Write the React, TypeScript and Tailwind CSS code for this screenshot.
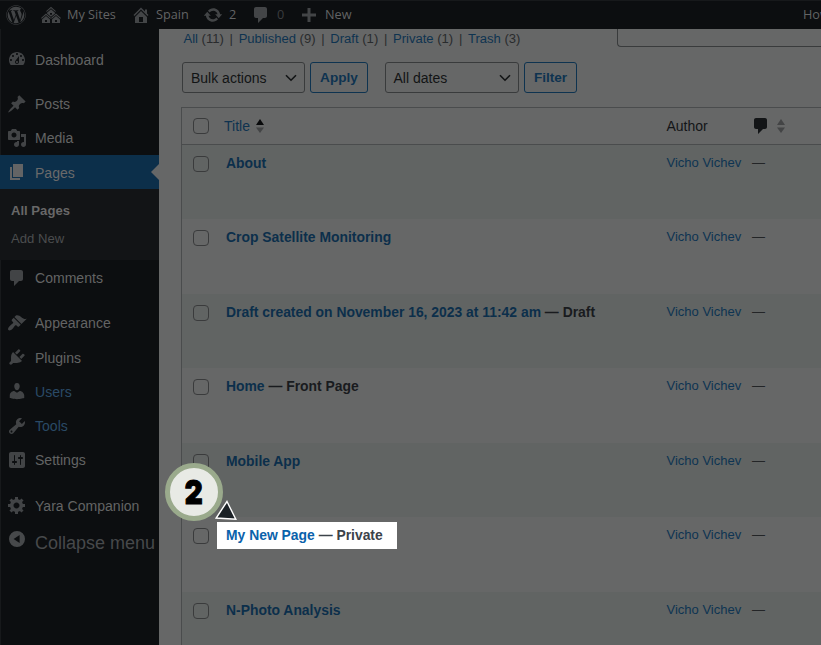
import React from "react";
import { FaWordpress } from "react-icons/fa";

const ICONS = {
  dashboard:
    "M3.76 16h12.48c1.1-1.37 1.76-3.11 1.76-5 0-4.42-3.58-8-8-8s-8 3.58-8 8c0 1.89.66 3.63 1.76 5zM10 4c.55 0 1 .45 1 1s-.45 1-1 1-1-.45-1-1 .45-1 1-1zM6 6c.55 0 1 .45 1 1s-.45 1-1 1-1-.45-1-1 .45-1 1-1zm8 0c.55 0 1 .45 1 1s-.45 1-1 1-1-.45-1-1 .45-1 1-1zm-5.37 5.55L12 7v6c0 1.1-.9 2-2 2s-2-.9-2-2c0-.57.24-1.08.63-1.45zM4 10c.55 0 1 .45 1 1s-.45 1-1 1-1-.45-1-1 .45-1 1-1zm12 0c.55 0 1 .45 1 1s-.45 1-1 1-1-.45-1-1 .45-1 1-1zm-5 3c0-.55-.45-1-1-1s-1 .45-1 1 .45 1 1 1 1-.45 1-1z",
  post: "M10.44 3.02l1.82-1.82 6.36 6.35-1.83 1.82c-1.05-.68-2.48-.57-3.41.36l-.75.75c-.92.93-1.04 2.35-.35 3.41l-1.83 1.82-2.41-2.41-2.8 2.79c-.42.42-3.38 2.71-3.8 2.29s1.86-3.39 2.28-3.81l2.79-2.79L4.1 9.36l1.83-1.82c1.05.69 2.48.57 3.4-.36l.75-.75c.93-.92 1.05-2.35.36-3.41z",
  media:
    "M13 11V4c0-.55-.45-1-1-1h-1.67L9 1H5L3.67 3H2c-.55 0-1 .45-1 1v7c0 .55.45 1 1 1h10c.55 0 1-.45 1-1zM7 4.5c1.38 0 2.5 1.12 2.5 2.5S8.38 9.5 7 9.5 4.5 8.38 4.5 7 5.62 4.5 7 4.5zM14 6h5v10.5c0 1.38-1.12 2.5-2.5 2.5S14 17.88 14 16.5s1.12-2.5 2.5-2.5c.17 0 .34.02.5.05V9h-3V6zm-4 8.05V13h2v3.5c0 1.38-1.12 2.5-2.5 2.5S7 17.88 7 16.5 8.12 14 9.5 14c.17 0 .34.02.5.05z",
  page: "M6 15V2h10v13H6zm-1 1h8v2H3V5h2v11z",
  comment:
    "M5 2h9c1.1 0 2 .9 2 2v7c0 1.1-.9 2-2 2h-2l-5 5v-5H5c-1.1 0-2-.9-2-2V4c0-1.1.9-2 2-2z",
  appearance:
    "M14.48 11.06L7.41 3.99l1.5-1.5c.5-.56 2.3-.47 3.51.32 1.21.8 1.43 1.28 2.91 2.1 1.18.64 2.45 1.26 4.45.85zm-.71.71L6.7 4.7 4.93 6.47c-.39.39-.39 1.02 0 1.41l1.06 1.06c.39.39.39 1.03 0 1.42-.6.6-1.43 1.11-2.21 1.69-.35.26-.7.53-1.01.84C1.43 14.23.4 16.08 1.4 17.07c.99 1 2.84-.03 4.18-1.36.31-.31.58-.66.85-1.02.57-.78 1.08-1.61 1.69-2.21.39-.39 1.02-.39 1.41 0l1.06 1.06c.39.39 1.02.39 1.41 0z",
  plugins:
    "M13.11 4.36L9.87 7.6 8 5.73l3.24-3.24c.35-.34 1.05-.2 1.56.32.52.51.66 1.21.31 1.55zm-8 1.77l.91-1.12 9.01 9.01-1.19.84c-.71.71-2.63 1.16-3.82 1.16H6.14L4.9 17.26c-.59.59-1.54.59-2.12 0-.59-.58-.59-1.53 0-2.12l1.24-1.24v-3.88c0-1.13.4-3.19 1.09-3.89zm7.26 3.97l3.24-3.24c.34-.35 1.04-.21 1.55.31.52.51.66 1.21.31 1.55l-3.24 3.25z",
  users:
    "M10 9.25c-2.27 0-2.73-3.44-2.73-3.44C7 4.02 7.82 2 9.97 2c2.16 0 2.98 2.02 2.71 3.81 0 0-.41 3.44-2.68 3.44zm0 2.57L12.72 10c2.39 0 4.52 2.33 4.52 4.53v2.49s-3.65 1.13-7.24 1.13c-3.65 0-7.24-1.13-7.24-1.13v-2.49c0-2.25 1.94-4.48 4.47-4.48z",
  tools:
    "M16.68 9.77c-1.34 1.34-3.3 1.67-4.95.99l-5.41 6.52c-.99.99-2.59.99-3.58 0s-.99-2.59 0-3.57l6.52-5.42c-.68-1.65-.35-3.61.99-4.95 1.28-1.28 3.12-1.62 4.72-1.06l-2.89 2.89 2.82 2.82 2.86-2.87c.53 1.58.18 3.39-1.08 4.65zM3.81 16.21c.4.39 1.04.39 1.43 0 .4-.4.4-1.04 0-1.43-.39-.4-1.03-.4-1.43 0-.39.39-.39 1.03 0 1.43z",
  settings:
    "M18 16V4c0-1.1-.9-2-2-2H4c-1.1 0-2 .9-2 2v12c0 1.1.9 2 2 2h12c1.1 0 2-.9 2-2zM8 11h1c.55 0 1 .45 1 1s-.45 1-1 1H8v1.5c0 .28-.22.5-.5.5s-.5-.22-.5-.5V13H6c-.55 0-1-.45-1-1s.45-1 1-1h1V5.5c0-.28.22-.5.5-.5s.5.22.5.5V11zm5-2h-1c-.55 0-1-.45-1-1s.45-1 1-1h1V5.5c0-.28.22-.5.5-.5s.5.22.5.5V7h1c.55 0 1 .45 1 1s-.45 1-1 1h-1v5.5c0 .28-.22.5-.5.5s-.5-.22-.5-.5V9z",
  generic:
    "M18 12h-2.18c-.17.7-.44 1.35-.81 1.93l1.54 1.54-2.1 2.1-1.54-1.54c-.58.36-1.23.63-1.91.79V19H8v-2.18c-.68-.16-1.33-.43-1.91-.79l-1.54 1.54-2.12-2.12 1.54-1.54c-.36-.58-.63-1.23-.79-1.91H1V9.03h2.17c.16-.7.44-1.35.8-1.94L2.43 5.55l2.1-2.1 1.54 1.54c.58-.37 1.24-.64 1.93-.81V2h3v2.18c.68.16 1.33.43 1.91.79l1.54-1.54 2.12 2.12-1.54 1.54c.36.59.64 1.24.8 1.94H18V12zm-8.5 1.5c1.66 0 3-1.34 3-3s-1.34-3-3-3-3 1.34-3 3 1.34 3 3 3z",
  update:
    "M10.2 3.28c3.53 0 6.43 2.61 6.92 6h2.08l-3.5 4-3.5-4h2.32c-.45-1.97-2.21-3.45-4.32-3.45-1.45 0-2.73.71-3.54 1.78L4.95 5.66C6.23 4.2 8.11 3.28 10.2 3.28zm-.4 13.44c-3.52 0-6.43-2.61-6.92-6H.8l3.5-4c1.17 1.33 2.33 2.67 3.5 4H5.48c.45 1.97 2.21 3.45 4.32 3.45 1.45 0 2.73-.71 3.54-1.78l1.71 1.95c-1.28 1.46-3.15 2.38-5.25 2.38z",
  home: "M16 8.5l1.53 1.53-1.06 1.06L10 4.6l-6.47 6.49-1.06-1.06L10 2.5l4 4v-2h2v4zm-6-2.46l6 5.99V18H4v-5.97zM12 17v-5H8v5h4z",
  multisite:
    "M14.27 6.87L10 3.14 5.73 6.87 5 6.14l5-4.38 5 4.38zM14 8.42l-4.05 3.43L6 8.38v-.74l4-3.5 4 3.5v.78zM11 9.7V8H9v1.7h2zm-1.73 4.03L5 10 .73 13.73 0 13l5-4.38L10 13zm10 0L15 10l-4.27 3.73L10 13l5-4.38L20 13zM5 11l4 3.5V18H1v-3.5zm10 0l4 3.5V18h-8v-3.5zm-9 6v-2H4v2h2zm10 0v-2h-2v2h2z",
  plus: "M17 8.5v3h-5.5V17h-3v-5.5H3v-3h5.5V3h3v5.5H17z",
  collapse:
    "M10 2a8 8 0 1 1 0 16 8 8 0 0 1 0-16zM12.6 6v8L6.6 10z",
};

type IconName = keyof typeof ICONS;

function Icon({ name, className = "size-5" }: { name: IconName; className?: string }) {
  return (
    <svg viewBox="0 0 20 20" className={`shrink-0 ${className}`} fill="currentColor" fillRule="evenodd">
      <path d={ICONS[name]} />
    </svg>
  );
}

function MenuItem({ icon, label, className = "text-[#636464]" }: { icon: IconName; label: string; className?: string }) {
  return (
    <li className={`flex h-[34.3px] items-center pl-[7px] ${className}`}>
      <Icon name={icon} className={`size-5 ${icon === "page" ? "text-[#636465]" : "text-[#424446]"}`} />
      <span className="pt-[2px] pl-2">{label}</span>
    </li>
  );
}

function Checkbox() {
  return <span className="block size-4 shrink-0 rounded-[4px] border border-[#3a3b3c]" />;
}

function Select({ label, className }: { label: string; className: string }) {
  return (
    <div className={`flex h-[31px] items-center justify-between rounded-[3px] border border-[#393b3c] pr-[7px] pl-2 text-[#121415] ${className}`}>
      <span className="pt-px">{label}</span>
      <svg viewBox="0 0 12 8" className="h-2 w-3" fill="none" stroke="currentColor" strokeWidth="1.6">
        <path d="M1 1.2l5 5 5-5" />
      </svg>
    </div>
  );
}

function Button({ label, className }: { label: string; className: string }) {
  return (
    <div className={`flex h-[31px] items-center justify-center rounded-[3px] border border-[#0e3350] pt-px text-[13.6px] font-bold text-[#0e3350] ${className}`}>
      {label}
    </div>
  );
}

function Sorter({ active = false }: { active?: boolean }) {
  return (
    <svg viewBox="0 0 8 14" className="h-3.5 w-2 shrink-0">
      <path d="M4 0l4 6H0z" fill={active ? "#090a0b" : "#434445"} />
      <path d="M0 8.5h8l-4 5.5z" fill="#434445" />
    </svg>
  );
}

const VIEWS = [
  ["All", 11],
  ["Published", 9],
  ["Draft", 1],
  ["Private", 1],
  ["Trash", 3],
] as const;

const PAGES: { title: string; state?: string; highlighted?: boolean }[] = [
  { title: "About" },
  { title: "Crop Satellite Monitoring" },
  { title: "Draft created on November 16, 2023 at 11:42 am", state: "Draft" },
  { title: "Home", state: "Front Page" },
  { title: "Mobile App" },
  { title: "My New Page", state: "Private", highlighted: true },
  { title: "N-Photo Analysis" },
];

function AdminBar() {
  return (
    <header className="flex h-[29px] shrink-0 items-center overflow-hidden border-t border-[#17191b] bg-[#0c0e10] font-['Open_Sans','Noto_Sans',sans-serif] text-[12.7px] whitespace-nowrap text-[#626364]">
      <FaWordpress className="ml-[6px] size-5 shrink-0 text-[#434547]" />
      <div className="ml-[15px] flex w-[90px] items-center gap-[6px]">
        <Icon name="multisite" className="size-5 text-[#434547]" />
        <span>My Sites</span>
      </div>
      <div className="flex w-[72px] items-center gap-[5px]">
        <Icon name="home" className="size-5 text-[#434547]" />
        <span>Spain</span>
      </div>
      <div className="flex w-[48px] items-center gap-[6px]">
        <Icon name="update" className="size-5 text-[#434547]" />
        <span>2</span>
      </div>
      <div className="flex w-[48px] items-center gap-[6px]">
        <Icon name="comment" className="size-5 text-[#434547]" />
        <span className="text-[#3a3c3e]">0</span>
      </div>
      <div className="flex items-center gap-[6px]">
        <Icon name="plus" className="size-5 text-[#434547]" />
        <span>New</span>
      </div>
      <span className="ml-auto w-[18px] overflow-hidden">How</span>
    </header>
  );
}

function Sidebar() {
  return (
    <nav className="w-[159px] shrink-0 overflow-hidden bg-[#0c0e10] pt-[13px] text-[14.05px] whitespace-nowrap shadow-[inset_1px_0_0_#17191b]">
      <ul>
        <MenuItem icon="dashboard" label="Dashboard" />
        <li className="h-[10.2px]" />
        <MenuItem icon="post" label="Posts" />
        <MenuItem icon="media" label="Media" />
        <li className="flex h-[34.3px] items-center justify-between bg-[#0c2f4a] text-[#666]">
          <ul>
            <MenuItem icon="page" label="Pages" className="text-[#6a6a6a]" />
          </ul>
          <svg viewBox="0 0 8 16" className="h-4 w-2" fill="#666767">
            <path d="M8 0v16L0 8z" />
          </svg>
        </li>
        <li className="h-[71px] bg-[#121416] pt-[8px] pl-[11px] text-[13.1px] leading-[28px]">
          <div className="font-bold text-[#686868]">All Pages</div>
          <div className="text-[#4b4d4e]">Add New</div>
        </li>
        <MenuItem icon="comment" label="Comments" />
        <li className="h-[11px]" />
        <MenuItem icon="appearance" label="Appearance" />
        <MenuItem icon="plugins" label="Plugins" />
        <MenuItem icon="users" label="Users" className="text-[#2a4a66]" />
        <MenuItem icon="tools" label="Tools" className="text-[#2a4a66]" />
        <MenuItem icon="settings" label="Settings" />
        <li className="h-[11px]" />
        <MenuItem icon="generic" label="Yara Companion" />
        <li className="flex h-9 pt-[6.5px] pl-[7px] text-[#47494b]">
          <Icon name="collapse" className="size-5 text-[#47494b]" />
          <span className="pl-2 text-[18px] leading-[28px]">Collapse menu</span>
        </li>
      </ul>
    </nav>
  );
}

function PageRow({ title, state, highlighted, shaded }: { title: string; state?: string; highlighted?: boolean; shaded: boolean }) {
  return (
    <div className={`flex h-[74.5px] shrink-0 pl-[11px] leading-[20px] ${shaded ? "bg-[#616463]" : ""}`}>
      <div className="pt-[11px]">
        <Checkbox />
      </div>
      <div className="w-[457.5px] pt-[5px] pl-2">
        <span
          className={`inline-block h-[27px] px-[9px] pt-[3px] text-[13.9px] font-bold ${
            highlighted ? "w-[180px] bg-white text-[#3c434a]" : "text-[#191b1e]"
          }`}
        >
          <span className={highlighted ? "text-[#0a62ab]" : "text-[#0c2f4b]"}>{title}</span>
          {state && <span> — {state}</span>}
        </span>
      </div>
      <div className="w-[85.5px] pt-[8px] text-[13px] text-[#0e3452]">Vicho Vichev</div>
      <div className="pt-[8px] text-[13px] text-[#232527]">—</div>
    </div>
  );
}

export default function App() {
  return (
    <div className="relative flex h-[645px] w-[821px] flex-col overflow-hidden bg-[#666767] font-['Liberation_Sans',Arial,sans-serif] text-[14px]">
      <AdminBar />
      <div className="flex min-h-0 flex-1">
        <Sidebar />
        <main className="flex min-w-0 flex-1 flex-col overflow-hidden pl-[22px] whitespace-nowrap">
          <div className="flex h-[33px] justify-between">
            <div className="flex pl-[2.5px] text-[13.05px] leading-[19px] text-[#292b2d]">
              {VIEWS.map(([name, count], i) => (
                <span key={name} className="flex">
                  {i > 0 && <span className="px-[5.7px]">|</span>}
                  <span>
                    <span className="text-[#0e3350]">{name}</span> ({count})
                  </span>
                </span>
              ))}
            </div>
            <div className="h-[18px] w-[204px] rounded-bl-[4px] border-b border-l border-[#393b3c]" />
          </div>
          <div className="flex h-[45px] items-start pl-px">
            <Select label="Bulk actions" className="w-[122.5px]" />
            <Button label="Apply" className="ml-[5.5px] w-[58px]" />
            <Select label="All dates" className="ml-[16.5px] w-[134px]" />
            <Button label="Filter" className="ml-[5.5px] w-[53px]" />
          </div>
          <section className="flex min-h-0 flex-1 flex-col border-t border-l border-[#4a4c4d]">
            <div className="flex h-[36.5px] shrink-0 items-center border-b border-[#4a4c4d] pl-[11px] text-[#131517]">
              <Checkbox />
              <div className="flex w-[457.5px] items-center gap-[6px] pl-[15px]">
                <span className="pt-[2px] text-[#0e3350]">Title</span>
                <Sorter active />
              </div>
              <div className="w-[84.5px] pt-[2px]">Author</div>
              <Icon name="comment" className="size-5 text-[#131517]" />
              <span className="pl-[6px]">
                <Sorter />
              </span>
            </div>
            {PAGES.map((page, i) => (
              <PageRow key={page.title} {...page} shaded={i % 2 === 0} />
            ))}
          </section>
        </main>
      </div>
      <div className="absolute top-[463px] left-[165px] flex size-[58px] items-center justify-center rounded-full border-[5px] border-[#9aaa8c] bg-[#e8eae5] font-['Inter',sans-serif] text-[33px] leading-none font-black text-black">
        <span className="scale-x-[0.84] [-webkit-text-stroke:1.2px_black]">2</span>
      </div>
      <svg viewBox="0 0 22 21" className="absolute top-[500px] left-[215px] h-[21px] w-[22px]">
        <path d="M12 1.5L20.8 19.2 1.2 18z" fill="#1b2126" stroke="#fff" strokeWidth="1.4" />
      </svg>
    </div>
  );
}
